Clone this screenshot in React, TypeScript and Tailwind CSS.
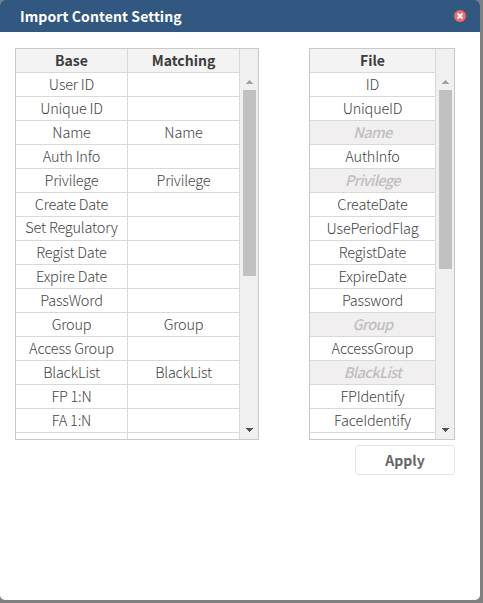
const baseRows: [string, string][] = [
  ['User ID', ''],
  ['Unique ID', ''],
  ['Name', 'Name'],
  ['Auth Info', ''],
  ['Privilege', 'Privilege'],
  ['Create Date', ''],
  ['Set Regulatory', ''],
  ['Regist Date', ''],
  ['Expire Date', ''],
  ['PassWord', ''],
  ['Group', 'Group'],
  ['Access Group', ''],
  ['BlackList', 'BlackList'],
  ['FP 1:N', ''],
  ['FA 1:N', ''],
  ['', ''],
];

const fileRows: { name: string; used?: boolean }[] = [
  { name: 'ID' },
  { name: 'UniqueID' },
  { name: 'Name', used: true },
  { name: 'AuthInfo' },
  { name: 'Privilege', used: true },
  { name: 'CreateDate' },
  { name: 'UsePeriodFlag' },
  { name: 'RegistDate' },
  { name: 'ExpireDate' },
  { name: 'Password' },
  { name: 'Group', used: true },
  { name: 'AccessGroup' },
  { name: 'BlackList', used: true },
  { name: 'FPIdentify' },
  { name: 'FaceIdentify' },
  { name: '' },
];

const cell = 'h-6 shrink-0 border-b border-[#d9d9d9] text-center whitespace-nowrap';
const headCell = `${cell} bg-[#f3f3f3] text-[14px] leading-[23px] font-bold text-[#3c3c3c]`;
const bodyText = 'text-[14.5px] font-light tracking-[-0.2px] text-[#444]';
const bodyCell = `${cell} ${bodyText} leading-[22px]`;
const raisedCell = `${cell} ${bodyText} leading-[20px]`;
const usedCell = `${cell} bg-[#f1eff0] text-[14.5px] leading-[22px] font-medium tracking-[-0.6px] text-[#c0bebf] italic`;

function ScrollBar({ thumb }: { thumb: string }) {
  return (
    <div className="flex w-[18px] shrink-0 flex-col items-center bg-[#f0f0f0] pt-[31px] pb-[7px] pl-px">
      <svg width="7" height="4" viewBox="0 0 7 4" shapeRendering="crispEdges" className="shrink-0">
        <path d="M3 0h1v1h1v1h1v1h1v1H0V3h1V2h1V1h1z" fill="#a3a3a3" />
      </svg>
      <div className={`mt-[6px] w-[13px] shrink-0 bg-[#c1c1c1] ${thumb}`} />
      <svg width="7" height="4" viewBox="0 0 7 4" shapeRendering="crispEdges" className="mt-auto shrink-0">
        <path d="M0 0h7v1H6v1H5v1H4v1H3V3H2V2H1V1H0z" fill="#505050" />
      </svg>
    </div>
  );
}

export default function App() {
  return (
    <div className="h-[603px] w-[483px] overflow-hidden bg-[#808080] font-['Noto_Sans_CJK_KR','Noto_Sans',sans-serif]">
      <div className="h-[600px] w-[480px] overflow-hidden rounded-[5px] bg-white">
        <div className="flex h-8 items-center justify-between bg-[#325882] pr-[14px] pl-5">
          <h1 className="text-[14px] leading-8 font-bold tracking-[0.1px] text-white">Import Content Setting</h1>
          <button aria-label="Close">
            <svg width="12" height="12" viewBox="0 0 12 12" className="block">
              <circle cx="6" cy="6" r="6" fill="#f2696a" />
              <path d="M3.5 3.5l5 5M8.5 3.5l-5 5" stroke="#fff" strokeWidth="1.9" />
            </svg>
          </button>
        </div>
        <div className="flex gap-[50px] pt-4 pl-[15px]">
          <div className="flex h-[392px] w-[244px] overflow-hidden border border-[#c8c8c8]">
            <div className="flex w-[112px] shrink-0 flex-col border-r border-[#d9d9d9]">
              <div className={headCell}>Base</div>
              {baseRows.map(([base], i) => (
                <div key={i} className={base === 'Set Regulatory' ? raisedCell : bodyCell}>
                  {base}
                </div>
              ))}
            </div>
            <div className="flex w-[112px] shrink-0 flex-col border-r border-[#d9d9d9]">
              <div className={headCell}>Matching</div>
              {baseRows.map(([, match], i) => (
                <div key={i} className={bodyCell}>{match}</div>
              ))}
            </div>
            <ScrollBar thumb="h-[186px]" />
          </div>
          <div className="w-[146px]">
            <div className="flex h-[392px] overflow-hidden border border-[#c8c8c8]">
              <div className="flex w-[126px] shrink-0 flex-col border-r border-[#d9d9d9]">
                <div className={headCell}>File</div>
                {fileRows.map(({ name, used }, i) => (
                  <div key={i} className={used ? usedCell : bodyCell}>
                    {name}
                  </div>
                ))}
              </div>
              <ScrollBar thumb="h-[179px]" />
            </div>
            <button className="mt-[5px] ml-auto block h-[30px] w-[100px] rounded-[3px] border border-[#e3e3e3] text-[14px] leading-7 font-bold text-[#666]">
              Apply
            </button>
          </div>
        </div>
      </div>
    </div>
  );
}
